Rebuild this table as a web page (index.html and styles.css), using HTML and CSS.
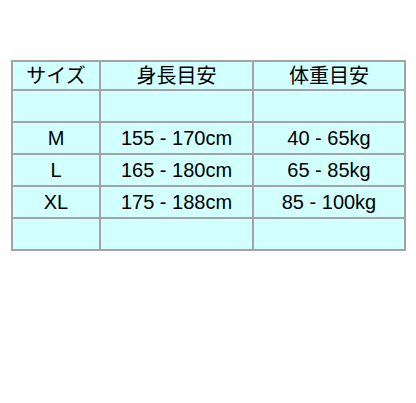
FILE: index.html
```html
<!DOCTYPE html>
<html lang="ja">
<head>
<meta charset="utf-8">
<title>サイズ表</title>
<link rel="stylesheet" href="styles.css">
</head>
<body>
<table class="size-table">
  <colgroup>
    <col class="c1"><col class="c2"><col class="c3">
  </colgroup>
  <tr class="head"><td>サイズ</td><td>身長目安</td><td>体重目安</td></tr>
  <tr><td></td><td></td><td></td></tr>
  <tr><td>M</td><td>155 - 170cm</td><td>40 - 65kg</td></tr>
  <tr><td>L</td><td>165 - 180cm</td><td>65 - 85kg</td></tr>
  <tr><td>XL</td><td>175 - 188cm</td><td>85 - 100kg</td></tr>
  <tr><td></td><td></td><td></td></tr>
</table>
</body>
</html>
```
FILE: styles.css
```css
html, body {
  margin: 0;
  padding: 0;
  background: #ffffff;
}
body {
  padding: 60px 0 0 11px;
  font-family: "Liberation Sans", "Noto Sans CJK JP", Arial, sans-serif;
}
.size-table {
  border-collapse: separate;
  border-spacing: 0;
  border-top: 2px solid #a3a3a3;
  border-left: 2px solid #a3a3a3;
  background: #d2ffff;
  table-layout: fixed;
  width: 395px;
}
.c1 { width: 88px; }
.c2 { width: 153px; }
.c3 { width: 152px; }
.size-table td {
  box-sizing: border-box;
  border-right: 2px solid #a3a3a3;
  border-bottom: 2px solid #a3a3a3;
  padding: 0;
  text-align: center;
  vertical-align: middle;
  font-size: 20px;
  line-height: 22px;
  color: #000;
  height: 32px;
}
.size-table tr.head td {
  height: 29px;
}
```
